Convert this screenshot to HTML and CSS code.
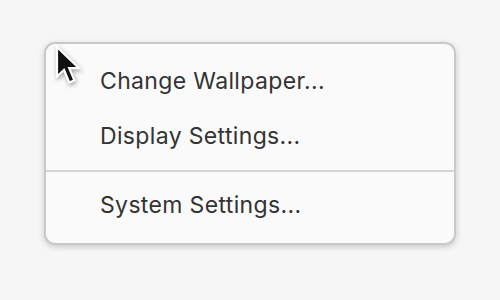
FILE: index.html
```html
<!DOCTYPE html>
<html>
<head>
<meta charset="utf-8">
<link rel="stylesheet" href="styles.css">
</head>
<body>
<div class="menu">
  <div class="item">Change Wallpaper...</div>
  <div class="item">Display Settings...</div>
  <div class="sep"></div>
  <div class="item">System Settings...</div>
</div>
<svg class="cursor" width="38" height="48" viewBox="-3 -3 38 48">
  <path d="M0 0 L0 29.5 L7 23 L12.2 35.5 L17.4 33.3 L12.2 21.2 L22 21.2 Z" fill="#111" stroke="#fff" stroke-width="2.2" stroke-linejoin="miter"/>
</svg>
</body>
</html>
```
FILE: styles.css
```css
html, body {
  margin: 0;
  padding: 0;
}
body {
  width: 500px;
  height: 300px;
  background: #f6f6f6;
  font-family: Inter, "Noto Sans", sans-serif;
  position: relative;
  overflow: hidden;
}
.menu {
  margin: 42px 0 0 44px;
  width: 412px;
  height: 203px;
  box-sizing: border-box;
  background: #fafafa;
  border: 2px solid #c9c9c9;
  border-radius: 11px;
  box-shadow: 0 2px 6px rgba(0,0,0,0.18);
  padding-top: 10px;
}
.item {
  height: 55px;
  line-height: 55px;
  padding-left: 54px;
  font-size: 23px;
  letter-spacing: 0.35px;
  color: #333;
}
.sep {
  height: 2px;
  background: #d4d4d4;
  margin: 6px 0;
}
.cursor {
  position: absolute;
  left: 54px;
  top: 44px;
  filter: drop-shadow(1px 2px 2px rgba(0,0,0,0.35));
}
```
